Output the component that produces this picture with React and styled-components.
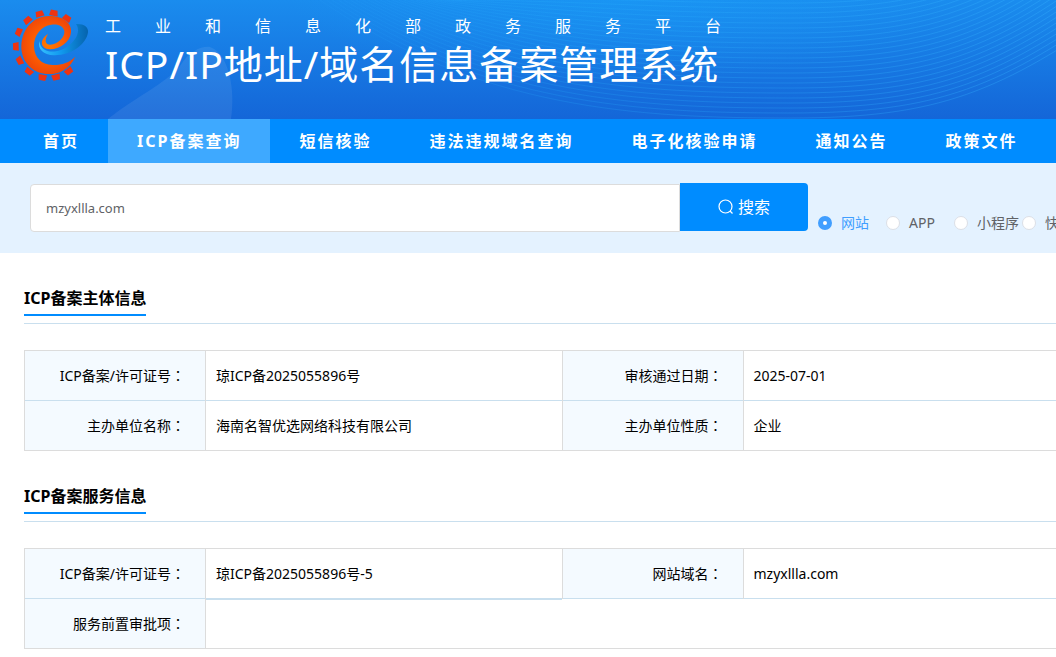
import React from 'react';
import styled, { createGlobalStyle, css } from 'styled-components';

const GlobalStyle = createGlobalStyle`
  *, *::before, *::after { box-sizing: border-box; }
  body {
    margin: 0;
    overflow-x: hidden;
    background: #fff;
    color: #000;
    font: 14px/20px "Noto Sans", "Noto Sans CJK SC", sans-serif;
  }
`;

const Page = styled.div`
  min-width: 1124px;
`;

const Header = styled.header`
  position: relative;
  display: flex;
  gap: 15px;
  height: 119px;
  padding: 6px 12px;
  background: linear-gradient(#1a8cee, #1466d8);
  color: #fff;
`;

const Waves = styled.svg`
  position: absolute;
  inset: 0;
  width: 100%;
  height: 100%;
`;

const Logo = styled.svg`
  position: relative;
  flex: none;
  width: 78px;
  height: 78px;
`;

const Brand = styled.div`
  position: relative;
  padding-top: 8px;
  white-space: nowrap;
`;

const Ministry = styled.p`
  margin: 0;
  font-size: 16px;
  line-height: 24px;
  letter-spacing: 34px;
`;

const SystemName = styled.h1`
  margin: 0;
  font-size: 39px;
  font-weight: 400;
  line-height: 52px;
  letter-spacing: 1px;
`;

const Nav = styled.nav`
  display: flex;
  height: 44px;
  padding-left: 14px;
  background: #008cff;
`;

const NavLink = styled.a`
  display: flex;
  align-items: center;
  padding: 0 29px;
  color: #fff;
  font-size: 16px;
  font-weight: 700;
  letter-spacing: 2px;
  white-space: nowrap;
  text-decoration: none;
  ${(p) => p.$active && css`
    background: #3ea9ff;
  `}
`;

const SearchBar = styled.form`
  display: flex;
  align-items: flex-start;
  height: 90px;
  padding: 20px 0 0 30px;
  background: #e4f2ff;
`;

const SearchInput = styled.input`
  flex: 1;
  min-width: 0;
  height: 48px;
  margin-top: 1px;
  padding: 0 15px;
  border: 1px solid #dcdcdc;
  border-radius: 4px 0 0 4px;
  background: #fff;
  color: #606266;
  font: inherit;
  font-size: 13px;
  outline: 0;
`;

const SearchButton = styled.button`
  display: flex;
  flex: none;
  align-items: center;
  justify-content: center;
  gap: 4px;
  width: 128px;
  height: 48px;
  padding: 0;
  border: 0;
  border-radius: 0 4px 4px 0;
  background: #008cff;
  color: #fff;
  font: inherit;
  font-size: 16px;
`;

const Options = styled.div`
  display: flex;
  flex: 0 0 316px;
  margin-top: 30px;
  padding-left: 10px;
`;

const Option = styled.label`
  display: flex;
  flex: 0 0 68px;
  align-items: center;
  gap: 9px;
  color: #606266;
  white-space: nowrap;
  &:has(input:checked) { color: #409eff; }
`;

const Radio = styled.input`
  appearance: none;
  flex: none;
  width: 14px;
  height: 14px;
  margin: 0;
  border: 1px solid #dcdfe6;
  border-radius: 50%;
  background: #fff;
  &:checked {
    border: 5px solid #409eff;
  }
`;

const Section = styled.section`
  padding: 32px 24px 0;
`;

const SectionHead = styled.div`
  display: flex;
  height: 39px;
  margin-bottom: 26px;
  border-bottom: 1px solid #c9dfee;
`;

const SectionTitle = styled.h2`
  height: 31px;
  margin: 0;
  border-bottom: 2px solid #008cff;
  font-size: 16px;
  font-weight: 700;
  line-height: 26px;
`;

const InfoTable = styled.table`
  width: 100%;
  table-layout: fixed;
  border: 1px solid #dcdcdc;
  border-collapse: collapse;
  tr + tr { border-top: 1px solid #c9dfee; }
`;

const LabelCol = styled.col`
  width: 181px;
`;

const LabelCell = styled.th`
  height: 50px;
  padding: 0 20px;
  border-right: 1px solid #dcdcdc;
  border-left: 1px solid #dcdcdc;
  background: #f4faff;
  font-weight: 400;
  text-align: right;
`;

const ValueCell = styled.td`
  padding: 0 10px;
  ${(p) => p.$underlined && css`
    box-shadow: 0 1px #c9dfee;
  `}
`;

const Colon = styled.span`
  font-family: "Noto Sans CJK TC", sans-serif;
`;

const NAV = ['首页', 'ICP备案查询', '短信核验', '违法违规域名查询', '电子化核验申请', '通知公告', '政策文件'];
const OPTIONS = ['网站', 'APP', '小程序', '快应用'];
const SUBJECT = [
  [['ICP备案/许可证号', '琼ICP备2025055896号'], ['审核通过日期', '2025-07-01']],
  [['主办单位名称', '海南名智优选网络科技有限公司'], ['主办单位性质', '企业']],
];
const SERVICE = [
  [['ICP备案/许可证号', '琼ICP备2025055896号-5'], ['网站域名', 'mzyxllla.com']],
  [['服务前置审批项', '']],
];

const TEETH = [-156, -130, -106, -81, -56, 52, 77, 101, 127, 152, 178];
const ARCS = Array.from({ length: 26 }, (_, i) => i);

function HeaderWaves() {
  return (
    <Waves viewBox="0 0 1124 119" preserveAspectRatio="none" aria-hidden="true">
      <defs>
        <radialGradient id="glow">
          <stop offset="0" stopColor="#18a0fa" stopOpacity=".45" />
          <stop offset="1" stopColor="#18a0fa" stopOpacity="0" />
        </radialGradient>
        <linearGradient id="arc" x1="320" x2="1124" y1="0" y2="0" gradientUnits="userSpaceOnUse">
          <stop offset="0" stopColor="#28a4ff" stopOpacity=".1" />
          <stop offset=".3" stopColor="#28b4ff" stopOpacity=".2" />
          <stop offset="1" stopColor="#38b4ff" stopOpacity=".35" />
        </linearGradient>
      </defs>
      <ellipse cx="620" cy="0" rx="330" ry="80" fill="url(#glow)" />
      <path d="M108 119C140 94 162 86 180 66C190 50 202 46 210 47C228 53 236 88 231 119Z" fill="#fff" fillOpacity=".08" />
      {ARCS.map((i) => (
        <path
          key={i}
          d={`M${320 + i * 6} 0C${480 + i * 4} ${110 - i * 5} 640 ${118 - i * 5} 790 ${118 - i * 5}S1000 ${92 - i * 5} 1124 ${6 - i * 6}`}
          fill="none"
          stroke="url(#arc)"
        />
      ))}
    </Waves>
  );
}

function GearLogo() {
  return (
    <Logo viewBox="36 15 234 234" role="img" aria-label="工业和信息化部">
      <defs>
        <radialGradient id="ember">
          <stop offset="0" stopColor="#ff7a00" />
          <stop offset=".6" stopColor="#fc5c02" />
          <stop offset="1" stopColor="#f04808" />
        </radialGradient>
        <linearGradient id="swoosh">
          <stop offset="0" stopColor="#35c0ff" />
          <stop offset=".45" stopColor="#1199ee" />
          <stop offset="1" stopColor="#0563ad" />
        </linearGradient>
      </defs>
      {TEETH.map((a) => (
        <path key={a} d="M-7 -13L10 -10V10L-7 13Z" fill="#ee3311" transform={`translate(146 133) rotate(${a}) translate(97 0)`} />
      ))}
      <path d="M228 69C252 68 266 78 264 94C260 128 215 164 162 163C130 162 112 144 118 120C122 147 143 154 168 151C208 145 250 100 228 69Z" fill="url(#swoosh)" />
      <path d="M226 167C208 207 172 222 138 219C91 214 62 176 64 132C67 82 101 45 148 45C188 45 216 65 213 94C210 125 177 146 149 145C121 143 117 116 144 99C132 119 136 131 151 131C174 130 195 109 193 91C191 75 174 68 154 71C124 75 101 102 102 137C104 170 124 190 157 192C185 193 207 185 226 167Z" fill="url(#ember)" />
    </Logo>
  );
}

function InfoSection({ title, rows }) {
  return (
    <Section>
      <SectionHead>
        <SectionTitle>{title}</SectionTitle>
      </SectionHead>
      <InfoTable aria-label={title}>
        <colgroup>
          <LabelCol />
          <col />
          <LabelCol />
          <col />
        </colgroup>
        <tbody>
          {rows.map((row, r) => (
            <tr key={row[0][0]}>
              {row.map(([label, value], c) => (
                <React.Fragment key={label}>
                  <LabelCell scope="row">{label}<Colon lang="zh-TW">：</Colon></LabelCell>
                  <ValueCell
                    colSpan={row.length === 1 ? 3 : 1}
                    $underlined={c === 0 && rows[r + 1]?.length === 1}
                  >
                    {value}
                  </ValueCell>
                </React.Fragment>
              ))}
            </tr>
          ))}
        </tbody>
      </InfoTable>
    </Section>
  );
}

export default function App() {
  return (
    <Page lang="zh-CN">
      <GlobalStyle />
      <Header>
        <HeaderWaves />
        <GearLogo />
        <Brand>
          <Ministry>工业和信息化部政务服务平台</Ministry>
          <SystemName>ICP/IP地址/域名信息备案管理系统</SystemName>
        </Brand>
      </Header>
      <Nav>
        {NAV.map((name, i) => (
          <NavLink key={name} href="#" $active={i === 1}>{name}</NavLink>
        ))}
      </Nav>
      <SearchBar onSubmit={(e) => e.preventDefault()}>
        <SearchInput aria-label="域名" defaultValue="mzyxllla.com" />
        <SearchButton type="submit">
          <svg width="16" height="16" viewBox="0 0 16 16" fill="none" stroke="currentColor" strokeWidth="1.2" aria-hidden="true">
            <circle cx="7.5" cy="7.5" r="6.5" />
            <path d="M12 12L14.5 14.5" />
          </svg>
          搜索
        </SearchButton>
        <Options role="radiogroup" aria-label="查询类型">
          {OPTIONS.map((name, i) => (
            <Option key={name}>
              <Radio type="radio" name="kind" defaultChecked={i === 0} />
              {name}
            </Option>
          ))}
        </Options>
      </SearchBar>
      <main>
        <InfoSection title="ICP备案主体信息" rows={SUBJECT} />
        <InfoSection title="ICP备案服务信息" rows={SERVICE} />
      </main>
    </Page>
  );
}
